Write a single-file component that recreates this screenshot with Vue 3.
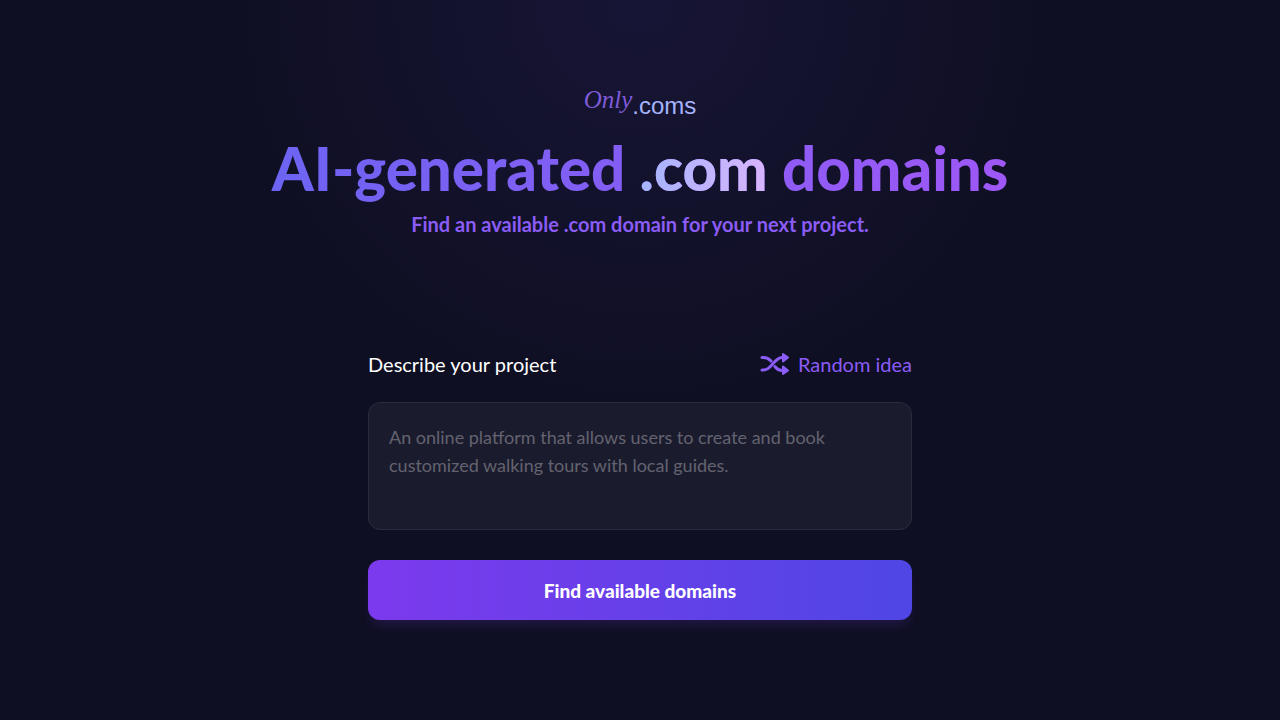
<script setup>
import { ref } from 'vue'

const ideas = [
  'An online platform that allows users to create and book customized walking tours with local guides.',
  'A marketplace where neighbours can lend and borrow garden tools.',
  'A weekly newsletter that explains new science in plain language.'
]
const description = ref('')
const next = ref(1)

function randomIdea() {
  description.value = ideas[next.value % ideas.length]
  next.value += 1
}
</script>

<template>
  <main class="page">
    <header class="hero">
      <a class="logo" href="#"><span class="logo-script">Only</span><span class="logo-tld">.coms</span></a>
      <h1 class="title">AI-generated <span class="title-tld">.com</span> domains</h1>
      <p class="tagline">Find an available .com domain for your next project.</p>
    </header>

    <form class="form" @submit.prevent>
      <div class="form-head">
        <label for="description">Describe your project</label>
        <button class="random" type="button" @click="randomIdea">
          <svg class="shuffle" viewBox="0 0 30 24" aria-hidden="true">
            <g fill="none" stroke="currentColor" stroke-width="3" stroke-linecap="round">
              <path d="M2 5.500h1.500c3.200 0 5.500 1.300 7.500 3.600" />
              <path d="M2 18h1.500C12 18 14 5.500 22 5.500h2" />
              <path d="M14.800 14.500c2 2.500 4.200 4 7.200 4h2" />
            </g>
            <path d="M23 2 28 5.500 23 9.500zM23 14.500 28 18.500 23 22z" fill="currentColor" stroke="currentColor" stroke-width="2" stroke-linejoin="round" />
          </svg>
          <span>Random idea</span>
        </button>
      </div>
      <textarea id="description" v-model="description" rows="3" :placeholder="ideas[0]"></textarea>
      <button class="submit" type="submit">Find available domains</button>
    </form>
  </main>
</template>

<style>
body {
  background: #0f0f23;
}
</style>

<style scoped>
.page {
  box-sizing: border-box;
  min-height: 100vh;
  padding: 80px 24px;
  background: radial-gradient(circle 420px at 50% 0, #171535, #0f0f23) no-repeat #0f0f23;
  color: #fff;
  font-family: "Lato", sans-serif;
}

.hero {
  display: flex;
  flex-direction: column;
  align-items: center;
  text-align: center;
}

.logo {
  display: flex;
  align-items: flex-start;
  height: 48px;
  text-decoration: none;
}

.logo-script {
  color: #7e5bd8;
  font-family: "Liberation Serif", serif;
  font-size: 25px;
  font-style: italic;
  line-height: 40px;
}

.logo-tld {
  color: #a5b4fc;
  font-family: "Liberation Sans", sans-serif;
  font-size: 24px;
  line-height: 52px;
}

.title {
  width: 100%;
  max-width: 1024px;
  margin: 4px 0 8px;
  background: linear-gradient(to right, #6366f1, #a855f7);
  background-clip: text;
  color: transparent;
  font-size: 60px;
  font-weight: 900;
  line-height: 72px;
}

.title-tld {
  background: linear-gradient(to right, #a5b4fc, #d8b4fe);
  background-clip: text;
}

.tagline {
  margin: 0;
  color: #8b5cf6;
  font-size: 20px;
  font-weight: 700;
  line-height: 24px;
}

.form {
  display: flex;
  flex-direction: column;
  max-width: 544px;
  margin: 112px auto 0;
}

.form-head {
  display: flex;
  align-items: center;
  justify-content: space-between;
  margin-bottom: 22px;
  font-size: 20px;
  line-height: 32px;
}

.random {
  display: flex;
  align-items: center;
  gap: 8px;
  padding: 0;
  border: 0;
  background: none;
  color: #8b5cf6;
  font: inherit;
  cursor: pointer;
}

.shuffle {
  width: 30px;
  height: 24px;
}

textarea {
  box-sizing: border-box;
  width: 100%;
  height: 128px;
  padding: 20px;
  border: 1px solid #2b2b3d;
  border-radius: 12px;
  background: #1b1b2e;
  color: #fff;
  font-family: inherit;
  font-size: 18px;
  line-height: 28px;
  resize: none;
}

textarea::placeholder {
  color: #63636f;
  opacity: 1;
}

.submit {
  height: 60px;
  margin-top: 30px;
  border: 0;
  border-radius: 12px;
  background: linear-gradient(to right, #7c3aed, #4f46e5);
  box-shadow: 0 8px 12px -4px rgba(124, 58, 237, 0.2);
  color: #fff;
  font-family: inherit;
  font-size: 19px;
  font-weight: 900;
  cursor: pointer;
}
</style>
